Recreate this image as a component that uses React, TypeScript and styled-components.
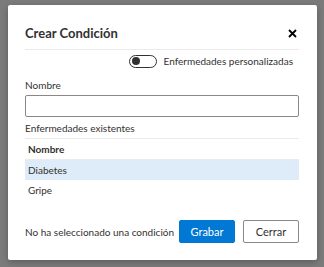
import React from "react";
import styled, { createGlobalStyle } from "styled-components";

const Global = createGlobalStyle`
  html, body { margin: 0; padding: 0; background: #7b7b7b; }
  body { font-family: Lato, "Noto Sans", sans-serif; color: #323130; }
  * { box-sizing: border-box; }
`;

const Page = styled.div`
  width: 324px;
  height: 267px;
  padding: 5px 7px 0 8px;
`;

const Dialog = styled.div`
  width: 309px;
  height: 255px;
  background: #fff;
  border-radius: 2px;
  box-shadow: 0 2px 6px rgba(0, 0, 0, 0.25);
  padding: 0 18px 0 17px;
  display: flex;
  flex-direction: column;
`;

const Header = styled.div`
  height: 45px;
  padding-top: 12px;
  display: flex;
  align-items: center;
  justify-content: space-between;
  border-bottom: 1px solid #edebe9;
`;

const Title = styled.h1`
  margin: 0;
  font-size: 13px;
  font-weight: 700;
  line-height: 20px;
  color: #323130;
`;

const Close = styled.button`
  border: 0;
  background: none;
  padding: 0;
  width: 12px;
  height: 12px;
  display: flex;
  align-items: center;
  justify-content: center;
  margin-right: 1px;
`;

const ToggleRow = styled.div`
  height: 22px;
  display: flex;
  align-items: center;
  justify-content: flex-end;
  gap: 7px;
  padding-right: 6px;
`;

const Switch = styled.span<{ $on?: boolean }>`
  width: 28px;
  height: 13px;
  border: 1px solid #323130;
  border-radius: 7px;
  display: flex;
  align-items: center;
  padding: 0 2px;
  justify-content: ${(p) => (p.$on ? "flex-end" : "flex-start")};
`;

const Knob = styled.span`
  width: 8px;
  height: 8px;
  border-radius: 50%;
  background: #323130;
`;

const Small = styled.span`
  font-size: 10px;
  line-height: 15px;
  color: #323130;
`;

const Label = styled.div<{ $mt: number }>`
  font-size: 10px;
  line-height: 15px;
  margin-top: ${(p) => p.$mt}px;
  color: #323130;
`;

const Input = styled.input`
  display: block;
  width: 100%;
  height: 22px;
  margin-top: 2px;
  border: 1px solid #8a8886;
  border-radius: 2px;
  font-family: inherit;
  font-size: 10px;
  padding: 0 6px;
  outline: none;
`;

const Table = styled.div`
  margin-top: 2px;
  border-top: 1px solid #edebe9;
  display: flex;
  flex-direction: column;
`;

const Row = styled.div<{ $head?: boolean; $selected?: boolean }>`
  height: ${(p) => (p.$head ? 21 : 20)}px;
  display: flex;
  align-items: center;
  padding-left: 3px;
  font-size: 10px;
  font-weight: ${(p) => (p.$head ? 700 : 400)};
  color: #323130;
  background: ${(p) => (p.$selected ? "#deecf9" : "transparent")};
  border-bottom: ${(p) => (p.$head ? "1px solid #edebe9" : "0")};
`;

const Footer = styled.div`
  margin-top: auto;
  margin-bottom: 17px;
  display: flex;
  align-items: center;
  gap: 8px;
`;

const Status = styled.span`
  flex: 1;
  min-width: 0;
  font-size: 10px;
  color: #323130;
  white-space: nowrap;
`;

const Button = styled.button<{ $primary?: boolean }>`
  flex: none;
  width: 56px;
  height: 23px;
  border-radius: 2px;
  font-family: inherit;
  font-size: 11px;
  padding: 0;
  border: 1px solid ${(p) => (p.$primary ? "#0078d4" : "#8a8886")};
  background: ${(p) => (p.$primary ? "#0078d4" : "#fff")};
  color: ${(p) => (p.$primary ? "#fff" : "#323130")};
`;

export default function App() {
  return (
    <>
      <Global />
      <Page>
        <Dialog>
          <Header>
            <Title>Crear Condición</Title>
            <Close aria-label="Cerrar">
              <svg width="9" height="9" viewBox="0 0 9 9">
                <path d="M1 1L8 8M8 1L1 8" stroke="#000" strokeWidth="1.8" />
              </svg>
            </Close>
          </Header>
          <ToggleRow>
            <Switch>
              <Knob />
            </Switch>
            <Small>Enfermedades personalizadas</Small>
          </ToggleRow>
          <Label $mt={6}>Nombre</Label>
          <Input />
          <Label $mt={4}>Enfermedades existentes</Label>
          <Table>
            <Row $head>Nombre</Row>
            <Row $selected>Diabetes</Row>
            <Row>Gripe</Row>
          </Table>
          <Footer>
            <Status>No ha seleccionado una condición</Status>
            <Button $primary>Grabar</Button>
            <Button>Cerrar</Button>
          </Footer>
        </Dialog>
      </Page>
    </>
  );
}
